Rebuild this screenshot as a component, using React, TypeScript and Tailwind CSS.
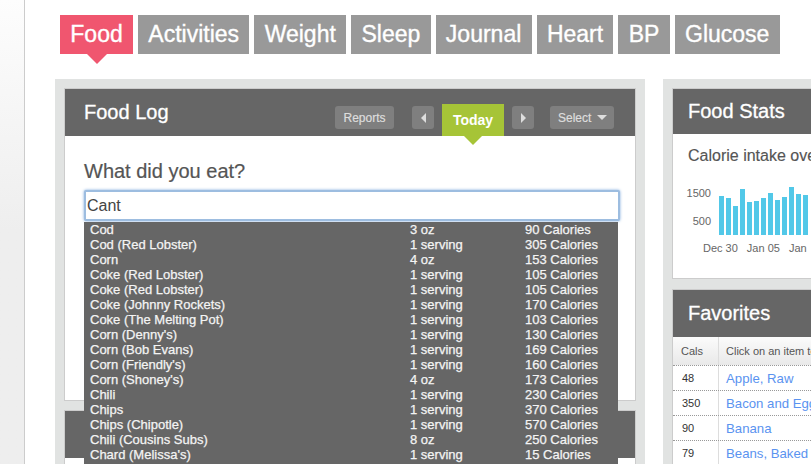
import React from "react";

const tabs = ["Food", "Activities", "Weight", "Sleep", "Journal", "Heart", "BP", "Glucose"];

const foods = [
  ["Cod", "3 oz", "90 Calories"],
  ["Cod (Red Lobster)", "1 serving", "305 Calories"],
  ["Corn", "4 oz", "153 Calories"],
  ["Coke (Red Lobster)", "1 serving", "105 Calories"],
  ["Coke (Red Lobster)", "1 serving", "105 Calories"],
  ["Coke (Johnny Rockets)", "1 serving", "170 Calories"],
  ["Coke (The Melting Pot)", "1 serving", "103 Calories"],
  ["Corn (Denny's)", "1 serving", "130 Calories"],
  ["Corn (Bob Evans)", "1 serving", "169 Calories"],
  ["Corn (Friendly's)", "1 serving", "160 Calories"],
  ["Corn (Shoney's)", "4 oz", "173 Calories"],
  ["Chili", "1 serving", "230 Calories"],
  ["Chips", "1 serving", "370 Calories"],
  ["Chips (Chipotle)", "1 serving", "570 Calories"],
  ["Chili (Cousins Subs)", "8 oz", "250 Calories"],
  ["Chard (Melissa's)", "1 serving", "15 Calories"],
];

const favorites = [
  ["48", "Apple, Raw"],
  ["350", "Bacon and Eggs"],
  ["90", "Banana"],
  ["79", "Beans, Baked"],
];

const barTops = [196, 198, 206, 189, 202, 201, 198, 193, 200, 197, 187, 194, 195];

const Panel = ({ title, tall, children }: { title?: string; tall?: boolean; children?: React.ReactNode }) => (
  <section className="border border-[#cccccc] bg-white">
    <div className={`flex items-center bg-[#666666] pb-[2px] pl-[15px] text-[20px] text-white [-webkit-text-stroke:0.3px_white] ${tall ? "h-[47px]" : "h-[45px]"}`}>
      {title}
    </div>
    {children}
  </section>
);

const FoodLogHeader = () => (
  <div className="relative z-10 flex h-[47px] items-end bg-[#666666] pl-[19px] pr-[21px]">
    <h2 className="mb-[2px] self-center text-[20px] text-white [-webkit-text-stroke:0.3px_white]">Food Log</h2>
    <div className="ml-auto flex items-end text-[12px] text-[#dddddd] [-webkit-text-stroke:0.2px_#dddddd]">
      <button className="mb-[7px] flex h-[23px] w-[59px] items-center justify-center rounded-[3px] bg-[#7f7f7f]">
        Reports
      </button>
      <button className="mb-[7px] ml-[18px] flex h-[23px] w-[22px] items-center justify-center rounded-[3px] bg-[#7f7f7f]">
        <span className="border-y-[5px] border-r-[5px] border-y-transparent border-r-[#dddddd]" />
      </button>
      <div className="relative ml-[8px] flex h-[32px] w-[62px] items-center justify-center bg-[#a6c437] pt-[1px] text-[14px] font-bold text-white [-webkit-text-stroke:0]">
        Today
        <span className="absolute left-[22px] top-full border-x-[9px] border-t-[9px] border-x-transparent border-t-[#a6c437]" />
      </div>
      <button className="mb-[7px] ml-[8px] flex h-[23px] w-[22px] items-center justify-center rounded-[3px] bg-[#7f7f7f]">
        <span className="border-y-[5px] border-l-[5px] border-y-transparent border-l-[#dddddd]" />
      </button>
      <button className="mb-[7px] ml-[16px] flex h-[23px] w-[64px] items-center gap-[6px] rounded-[3px] bg-[#7f7f7f] pl-[8px]">
        Select
        <span className="border-x-[5px] border-t-[5px] border-x-transparent border-t-[#dddddd]" />
      </button>
    </div>
  </div>
);

const FoodLog = () => (
  <section className="border border-[#cccccc] bg-white">
    <FoodLogHeader />
    <div className="relative h-[264px] px-[19px] pt-[23px]">
      <h3 className="text-[20px] leading-[24px] text-[#555555] [-webkit-text-stroke:0.2px_#555555]">What did you eat?</h3>
      <input
        defaultValue="Cant"
        className="mt-[7px] h-[31px] w-[536px] rounded-[2px] border-2 border-[#9dbde0] bg-white pl-[1px] text-[16px] text-[#444444] shadow-[0_0_3px_#7aa7dc] outline-none"
      />
      <ul className="absolute left-[19px] top-[86px] z-20 w-[534px] bg-[#666666] pb-[20px] text-[13px] leading-[15px] text-[#f4f4f4] [-webkit-text-stroke:0.25px_#f4f4f4]">
        {foods.map(([name, size, cals], i) => (
          <li key={i} className="flex h-[15px] whitespace-nowrap pl-[6px]">
            <span className="w-[320px]">{name}</span>
            <span className="w-[115px]">{size}</span>
            <span>{cals}</span>
          </li>
        ))}
      </ul>
    </div>
  </section>
);

const FoodStats = () => (
  <Panel title="Food Stats">
    <div className="h-[144px] whitespace-nowrap pl-[15px] pt-[12px]">
      <p className="text-[16px] leading-[20px] text-[#555555] [-webkit-text-stroke:0.15px_#555555]">
        Calorie intake over the last 30 days
      </p>
      <div className="mt-[19px] flex h-[50px] gap-[8px]">
        <div className="flex w-[23px] flex-col items-end gap-[14px] pt-[1px] text-[11px] leading-[14px] text-[#666666]">
          <span>1500</span>
          <span>500</span>
        </div>
        <svg width="92" height="50" viewBox="719 185 92 50">
          {barTops.map((top, i) => (
            <rect key={i} x={719 + i * 7} y={top} width="5" height={235 - top} fill="#52c8e8" />
          ))}
        </svg>
      </div>
      <div className="ml-[15px] mt-[6px] flex gap-[9px] text-[11px] leading-[14px] text-[#666666]">
        <span>Dec 30</span>
        <span>Jan 05</span>
        <span>Jan</span>
      </div>
    </div>
  </Panel>
);

const Favorites = () => (
  <Panel title="Favorites" tall>
    <div className="flex h-[29px] items-center whitespace-nowrap border-b border-dotted border-[#999999] bg-linear-to-b from-[#fbfbfb] to-[#e9e9e9] text-[11px] text-[#555555]">
      <span className="flex h-full w-[46px] items-center border-r border-[#dddddd] pl-[8px]">Cals</span>
      <span className="pl-[7px]">Click on an item to add it</span>
    </div>
    {favorites.map(([cals, name]) => (
      <div key={name} className="flex h-[25px] items-center whitespace-nowrap border-b border-dotted border-[#999999]">
        <span className="flex h-full w-[46px] items-center border-r border-[#dddddd] pl-[9px] text-[11px] text-[#333333]">
          {cals}
        </span>
        <a className="pl-[7px] pt-[1px] text-[13.2px] text-[#5a93f0]">{name}</a>
      </div>
    ))}
  </Panel>
);

export default function App() {
  return (
    <div className="flex h-[464px] w-[811px] overflow-hidden bg-white font-['Liberation_Sans',Arial,sans-serif]">
      <div className="w-[25px] shrink-0 border-r border-[#cccccc] bg-linear-to-b from-[#fdfdfd] to-[#eeeeee] to-50%" />
      <main className="min-w-0 flex-1 pl-[30px]">
        <nav className="ml-[5px] flex gap-[5px] pt-[15px]">
          {tabs.map((tab, i) => (
            <a
              key={tab}
              className={`relative flex h-[39px] items-center px-[10.3px] text-[23px] text-white [-webkit-text-stroke:0.35px_white] ${i === 0 ? "bg-[#f0566f]" : "bg-[#999999]"}`}
            >
              {tab}
              {i === 0 && (
                <span className="absolute left-[27px] top-full border-x-[10px] border-t-[10px] border-x-transparent border-t-[#f0566f]" />
              )}
            </a>
          ))}
        </nav>
        <div className="mt-[25px] flex gap-[18px]">
          <div className="flex w-[590px] shrink-0 flex-col gap-[9px] bg-[#e1e3e2] p-[9px]">
            <FoodLog />
            <Panel tall>
              <div className="h-[40px]" />
            </Panel>
          </div>
          <div className="flex w-[400px] shrink-0 flex-col gap-[10px] bg-[#e1e3e2] p-[9px]">
            <FoodStats />
            <Favorites />
          </div>
        </div>
      </main>
    </div>
  );
}
